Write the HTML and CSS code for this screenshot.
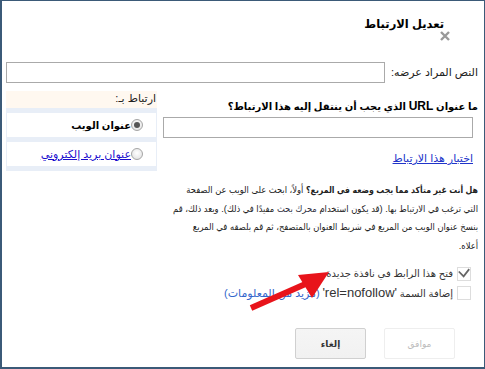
FILE: index.html
```html
<!DOCTYPE html>
<html lang="ar" dir="rtl">
<head>
  <meta charset="UTF-8" />
  <title>تعديل الارتباط</title>
  <link rel="stylesheet" href="styles.css">
</head>
<body>
  <div class="dialog">
    <div class="title">تعديل الارتباط</div>
    <svg class="close" width="10" height="10" viewBox="0 0 10 10"><path d="M1 1 L9 9 M9 1 L1 9" stroke="#999" stroke-width="2.4"/></svg>

    <div class="text-row">
      <label class="lbl">النص المراد عرضه:</label>
      <input type="text" class="field wide" />
    </div>

    <div class="main">
      <div class="url-col">
        <div class="question">ما عنوان <span class="latin">URL</span> الذي يجب أن ينتقل إليه هذا الارتباط؟</div>
        <input type="text" class="field url" />
        <a href="#" class="test-link">اختبار هذا الارتباط</a>
      </div>

      <div class="link-to">
        <div class="link-head">ارتباط بـ:</div>
        <div class="sep"></div>
        <div class="opt"><span class="radio on"></span><b>عنوان الويب</b></div>
        <div class="sep"></div>
        <div class="opt"><span class="radio"></span><a href="#" class="mail">عنوان بريد إلكتروني</a></div>
        <div class="sep"></div>
      </div>
    </div>

    <p class="help"><b>هل أنت غير متأكد مما يجب وضعه في المربع؟</b> أولاً، ابحث على الويب عن الصفحة التي ترغب في الارتباط بها. (قد يكون استخدام <span class="soft">محرك بحث</span> مفيدًا في ذلك). وبعد ذلك، قم بنسخ عنوان الويب من المربع في شريط العنوان بالمتصفح، ثم قم بلصقه في المربع أعلاه.</p>

    <div class="checks">
      <div class="check-row">
        <span class="box">
          <svg width="15" height="13" viewBox="0 0 15 13"><path d="M1 4 L7 10 L14 1" fill="none" stroke="#666" stroke-width="2.2"/></svg>
        </span>
        <span>فتح هذا الرابط في نافذة جديدة</span>
      </div>
      <div class="check-row">
        <span class="box"></span>
        <span>إضافة السمة <span class="latin">'rel=nofollow'</span> <span class="more">(مزيد من المعلومات)</span></span>
      </div>
    </div>

    <div class="buttons">
      <button class="btn disabled">موافق</button>
      <button class="btn">إلغاء</button>
    </div>

    <svg class="arrow" width="485" height="369" viewBox="0 0 485 369">
      <line x1="251" y1="308" x2="310" y2="282" stroke="#e8141b" stroke-width="6"/>
      <polygon points="329,272 298,275 312,298" fill="#e8141b"/>
    </svg>
  </div>
</body>
</html>
```

FILE: styles.css
```css
html, body { margin: 0; padding: 0; }
body {
  font-family: Arial, "Liberation Sans", "DejaVu Sans", sans-serif;
  font-size: 11px;
  color: #222;
  background: #fff;
}
.dialog {
  position: relative;
  box-sizing: border-box;
  width: 485px;
  height: 369px;
  border: 1px solid #3b5a78;
  border-left-width: 2px;
  border-bottom-width: 2px;
  padding: 0 6px 0 4px;
}
.title {
  font-size: 11.5px;
  font-weight: bold;
  color: #000;
  padding: 16px 34px 0 0;
  height: 20px;
}
.close {
  position: absolute;
  right: 34px;
  top: 30px;
}
.text-row {
  display: flex;
  align-items: center;
  gap: 6px;
  margin-top: 25px;
}
.lbl { white-space: nowrap; }
.field {
  box-sizing: border-box;
  height: 21px;
  border: 1px solid #aaa;
  font: inherit;
}
.wide { flex: 1; }
.main {
  display: flex;
  gap: 6px;
  margin-top: 8px;
}
.url-col {
  flex: 1;
  padding-top: 8px;
}
.question {
  font-size: 10px;
  font-weight: bold;
  color: #000;
}
.question .latin { font-size: 12px; }
.url {
  display: block;
  width: 310px;
  margin: 4px 5px 0 0;
}
.test-link {
  display: inline-block;
  margin: 14px 5px 0 0;
  color: #2034c9;
}
.help {
  width: 305px;
  height: 74px;
  margin: 10px 0 0;
  font-family: Arial, "DejaVu Sans Condensed", "DejaVu Sans", sans-serif;
  font-size: 9.3px;
  line-height: 18.6px;
  color: #222;
}
.help b { font-size: 8.7px; }
.soft { color: #334; }
.link-to {
  width: 153px;
}
.link-head {
  background: #fff8f0;
  height: 17px;
  line-height: 15px;
  padding-right: 1px;
}
.sep {
  height: 5px;
  background: #e8eef7;
}
.opt {
  display: flex;
  align-items: center;
  height: 24px;
  padding-right: 13px;
  border-right: 1px solid #e8eef7;
  border-left: 1px solid #e8eef7;
  font-size: 10px;
  color: #000;
}
.radio {
  box-sizing: border-box;
  width: 12px;
  height: 12px;
  border-radius: 50%;
  border: 1px solid #a5a5a5;
  background: radial-gradient(circle at 50% 40%, #fff, #ddd);
  position: relative;
}
.radio.on::after {
  content: "";
  position: absolute;
  left: 2px;
  top: 2px;
  width: 6px;
  height: 6px;
  border-radius: 50%;
  background: #555;
}
.mail { color: #1a0dce; font-size: 11px; }
.checks {
  margin-top: 9px;
  padding-right: 7px;
}
.check-row {
  display: flex;
  align-items: center;
  gap: 4px;
  height: 19px;
  font-size: 10px;
  color: #333;
}
.check-row .latin { font-size: 13px; }
.box {
  box-sizing: border-box;
  width: 14px;
  height: 14px;
  border: 1px solid #ddd;
  display: flex;
  align-items: center;
  justify-content: center;
}
.more { color: #36c; font-size: 11px; }
.buttons {
  display: flex;
  gap: 18px;
  padding-right: 23px;
  margin-top: 26px;
}
.btn {
  width: 71px;
  height: 31px;
  font: bold 9px Arial, "Liberation Sans", "DejaVu Sans", sans-serif;
  color: #333;
  background: linear-gradient(#f5f5f5, #f1f1f1);
  border: 1px solid #d0d0d0;
  border-radius: 2px;
}
.btn.disabled {
  color: #bbb;
  font-weight: normal;
  background: #fff;
  border-color: #eee;
}
.arrow {
  position: absolute;
  left: -2px;
  top: -1px;
  pointer-events: none;
}
```
